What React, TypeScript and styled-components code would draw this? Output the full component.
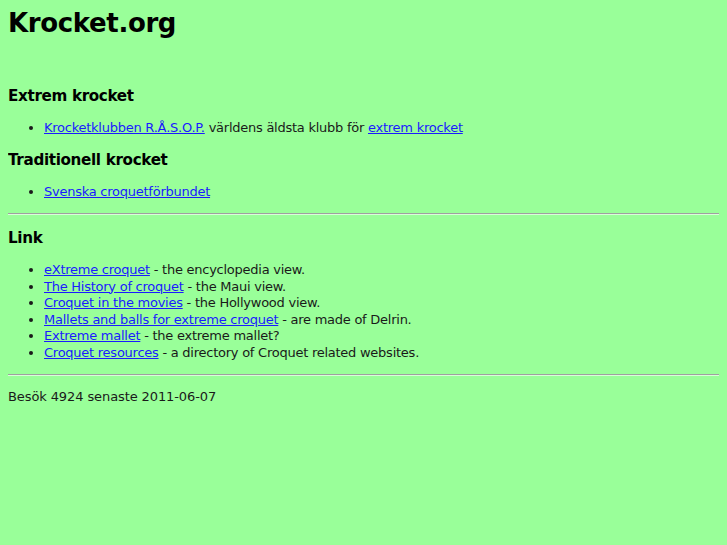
import React from "react";
import styled, { createGlobalStyle } from "styled-components";

const Global = createGlobalStyle`
  html, body {
    margin: 0;
    padding: 0;
    background: #99ff99;
  }
  body {
    margin: 8px;
    font-family: "DejaVu Sans", Verdana, sans-serif;
    font-size: 13px;
    line-height: 16.5px;
    color: #1a1a1a;
  }
`;

const Page = styled.div`
  display: flow-root;
`;

const Title = styled.h1`
  margin: 0 0 50px;
  font-size: 26px;
  line-height: 30px;
  font-weight: bold;
  letter-spacing: -0.36px;
  color: #000;
`;

const Heading = styled.h3`
  margin: 15px 0;
  font-size: 15.2px;
  line-height: 17px;
  font-weight: bold;
  letter-spacing: -0.35px;
  color: #000;
`;

const List = styled.ul`
  margin: 13px 0;
  padding-left: 36px;
  list-style: disc;
`;

const Item = styled.li`
  letter-spacing: -0.25px;
`;

const Link = styled.a`
  color: #1a1aff;
  text-decoration: underline;
`;

const Rule = styled.hr`
  margin: 6.5px 0;
  border: none;
  border-top: 1px solid #a0a0a0;
  border-bottom: 1px solid #d8ffd8;
  height: 0;
`;

const Footer = styled.p`
  margin: 13px 0;
  letter-spacing: -0.1px;
`;

const links: [string, string][] = [
  ["eXtreme croquet", " - the encyclopedia view."],
  ["The History of croquet", " - the Maui view."],
  ["Croquet in the movies", " - the Hollywood view."],
  ["Mallets and balls for extreme croquet", " - are made of Delrin."],
  ["Extreme mallet", " - the extreme mallet?"],
  ["Croquet resources", " - a directory of Croquet related websites."],
];

export default function App() {
  return (
    <Page>
      <Global />
      <Title>Krocket.org</Title>
      <Heading>Extrem krocket</Heading>
      <List>
        <Item>
          <Link href="#">Krocketklubben R.Å.S.O.P.</Link> världens äldsta klubb för{" "}
          <Link href="#">extrem krocket</Link>
        </Item>
      </List>
      <Heading>Traditionell krocket</Heading>
      <List>
        <Item>
          <Link href="#">Svenska croquetförbundet</Link>
        </Item>
      </List>
      <Rule />
      <Heading>Link</Heading>
      <List>
        {links.map(([a, b]) => (
          <Item key={a}>
            <Link href="#">{a}</Link>
            {b}
          </Item>
        ))}
      </List>
      <Rule />
      <Footer>Besök 4924 senaste 2011-06-07</Footer>
    </Page>
  );
}
